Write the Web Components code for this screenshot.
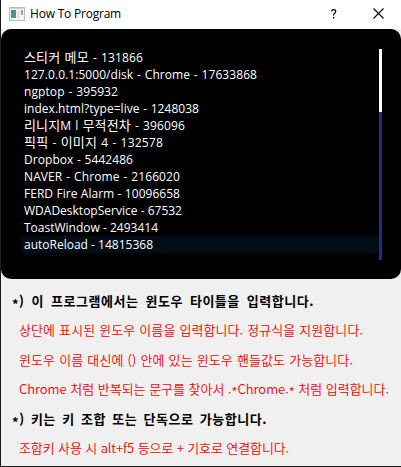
<!DOCTYPE html>
<html lang="ko">
<head>
<meta charset="utf-8">
<title>How To Program</title>
<style>
  html, body { margin: 0; height: 100%; overflow: hidden; }
  body { font-family: "Open Sans", "Noto Sans CJK KR", sans-serif; }
  /* hangul set a little larger than the latin beside it */
  .ko { font-size: 13px; line-height: 1; }
  /* asterisk on the text's middle line */
  .star { position: relative; top: 3px; }
</style>
</head>
<body>
<help-dialog>
  <title-bar slot="title"><fit-text width="91">How To Program</fit-text></title-bar>
  <window-list slot="list">
    <window-row><fit-text width="119"><span class="ko">스티커 메모</span> - 131866</fit-text></window-row>
    <window-row><fit-text width="233">127.0.0.1:5000/disk - Chrome - 17633868</fit-text></window-row>
    <window-row><fit-text width="94">ngptop - 395932</fit-text></window-row>
    <window-row><fit-text width="175">index.html?type=live - 1248038</fit-text></window-row>
    <window-row><fit-text width="161"><span class="ko">리니지</span>M l <span class="ko">무적전차</span> - 396096</fit-text></window-row>
    <window-row><fit-text width="139"><span class="ko">픽픽</span> - <span class="ko">이미지</span> 4 - 132578</fit-text></window-row>
    <window-row><fit-text width="109">Dropbox - 5442486</fit-text></window-row>
    <window-row><fit-text width="156">NAVER - Chrome - 2166020</fit-text></window-row>
    <window-row><fit-text width="156">FERD Fire Alarm - 10096658</fit-text></window-row>
    <window-row><fit-text width="158">WDADesktopService - 67532</fit-text></window-row>
    <window-row><fit-text width="134">ToastWindow - 2493414</fit-text></window-row>
    <window-row selected><fit-text width="129">autoReload - 14815368</fit-text></window-row>
  </window-list>
  <help-line heading><fit-text width="302"><span class="star">*</span>) 이 프로그램에서는 윈도우 타이틀을 입력합니다.</fit-text></help-line>
  <help-line><fit-text width="344">상단에 표시된 윈도우 이름을 입력합니다. 정규식을 지원합니다.</fit-text></help-line>
  <help-line><fit-text width="334">윈도우 이름 대신에 () 안에 있는 윈도우 핸들값도 가능합니다.</fit-text></help-line>
  <help-line><fit-text width="370">Chrome 처럼 반복되는 문구를 찾아서 .<span class="star">*</span>Chrome.<span class="star">*</span> 처럼 입력합니다.</fit-text></help-line>
  <help-line heading><fit-text width="255"><span class="star">*</span>) 키는 키 조합 또는 단독으로 가능합니다.</fit-text></help-line>
  <help-line><fit-text width="270">조합키 사용 시 alt+f5 등으로 + 기호로 연결합니다.</fit-text></help-line>
</help-dialog>

<script>
(function () {
  'use strict';

  // Attach an open root and fill it
  function render(el, html) {
    el.attachShadow({ mode: 'open' }).innerHTML = html;
  }

  /* ---- <fit-text width="n">: spaces one line of text to a set width ---- */
  class FitText extends HTMLElement {
    connectedCallback() {
      if (this.shadowRoot) return;
      render(this, `
        <style>
          :host { display: block; white-space: nowrap; }
          .line { display: inline-block; }
        </style>
        <span class="line"><slot></slot></span>
      `);
      const line = this.shadowRoot.querySelector('.line');
      const text = this.textContent;
      const spare = Number(this.getAttribute('width')) - line.getBoundingClientRect().width;
      // room to spare goes between the words, a shortage comes off every letter
      if (spare > 0) {
        line.style.wordSpacing = (spare / 2 / (text.split(' ').length - 1)).toFixed(3) + 'px';
        line.style.letterSpacing = (spare / 2 / text.length).toFixed(3) + 'px';
      } else {
        line.style.letterSpacing = (spare / text.length).toFixed(3) + 'px';
      }
    }
  }

  /* ---- <title-bar> ---- */
  class TitleBar extends HTMLElement {
    constructor() {
      super();
      render(this, `
        <style>
          :host {
            display: flex; flex: none; align-items: center; box-sizing: border-box;
            height: 29px; padding: 0 17px 2px 8px;
            background: #fff; color: #000; font-size: 12px; line-height: 17px;
          }
          .app { margin-right: 5px; }
          .help { margin-left: auto; margin-right: 36px; }
          svg { display: block; flex: none; }
        </style>
        <svg class="app" width="16" height="14" viewBox="0 0 16 14">
          <defs>
            <linearGradient id="g" x1="0" y1="0" x2="1" y2="1">
              <stop offset="0" stop-color="#4b7fa8"/>
              <stop offset="1" stop-color="#4fa574"/>
            </linearGradient>
          </defs>
          <rect x=".5" y=".5" width="15" height="13" fill="#f4f4f4" stroke="#b9bcbe"/>
          <rect x="1" y="1" width="14" height="1" fill="#cfd2d4"/>
          <rect x="2" y="3" width="5" height="8" fill="url(#g)"/>
          <rect x="8" y="3" width="3" height="8" fill="#e2e3e5"/>
          <rect x="12" y="3" width="2" height="5" fill="url(#g)" opacity=".7"/>
        </svg>
        <slot></slot>
        <svg class="help" width="6" height="10" viewBox="0 0 6 10">
          <path d="M.7 2.6V2Q.9.7 2.7.7 4.7.7 4.7 2.4 4.7 3.5 3.6 4.3 2.6 5 2.6 6.5" fill="none" stroke="#000" stroke-width="1.2"/>
          <rect x="2" y="8" width="1.3" height="1.5"/>
        </svg>
        <svg width="11" height="11" viewBox="0 0 11 11">
          <path d="M.5.5l10 10M10.5.5l-10 10" stroke="#000" stroke-width="1.1"/>
        </svg>
      `);
    }
  }

  /* ---- <window-list>: black panel with a thin scroll bar ---- */
  class WindowList extends HTMLElement {
    constructor() {
      super();
      render(this, `
        <style>
          :host {
            display: flex; flex: none; box-sizing: border-box; height: 250px;
            padding: 20px 19px 19px 20px;
            border-radius: 10px; background: #000; color: #fff;
          }
          .rows { flex: 1; }
          .track { width: 3px; background: #232c83; }
          .thumb { height: 63px; background: #fff; }
        </style>
        <div class="rows"><slot></slot></div>
        <div class="track"><div class="thumb"></div></div>
      `);
    }
  }

  class WindowRow extends HTMLElement {
    constructor() {
      super();
      render(this, `
        <style>
          :host {
            display: flex; height: 17px; padding-left: 3px;
            font-size: 12px; line-height: 17px;
          }
          :host([selected]) { background: #000d17; }
        </style>
        <slot></slot>
      `);
    }
  }

  /* ---- <help-line>: red hint, or a bold black heading ---- */
  class HelpLine extends HTMLElement {
    constructor() {
      super();
      render(this, `
        <style>
          :host {
            display: flex; align-items: center; flex: 1; padding-left: 18px;
            color: #f00; font: 350 13px/18px "Noto Sans CJK KR", sans-serif;
          }
          :host([heading]) { padding-left: 11px; color: #000; font-weight: 700; }
        </style>
        <slot></slot>
      `);
    }
  }

  /* ---- <help-dialog>: window frame ---- */
  class HelpDialog extends HTMLElement {
    constructor() {
      super();
      render(this, `
        <style>
          :host {
            display: flex; flex-direction: column; box-sizing: border-box;
            width: 401px; height: 467px;
            border-left: 1px solid #1b1b1f; border-bottom: 1px solid #1b1b1f;
            background: #f0f0f0;
          }
          .help { flex: 1; display: flex; flex-direction: column; padding: 7px 0 3px; }
        </style>
        <slot name="title"></slot>
        <slot name="list"></slot>
        <div class="help"><slot></slot></div>
      `);
    }
  }

  customElements.define('help-dialog', HelpDialog);
  customElements.define('title-bar', TitleBar);
  customElements.define('window-list', WindowList);
  customElements.define('window-row', WindowRow);
  customElements.define('help-line', HelpLine);
  customElements.define('fit-text', FitText);
})();
</script>
</body>
</html>
